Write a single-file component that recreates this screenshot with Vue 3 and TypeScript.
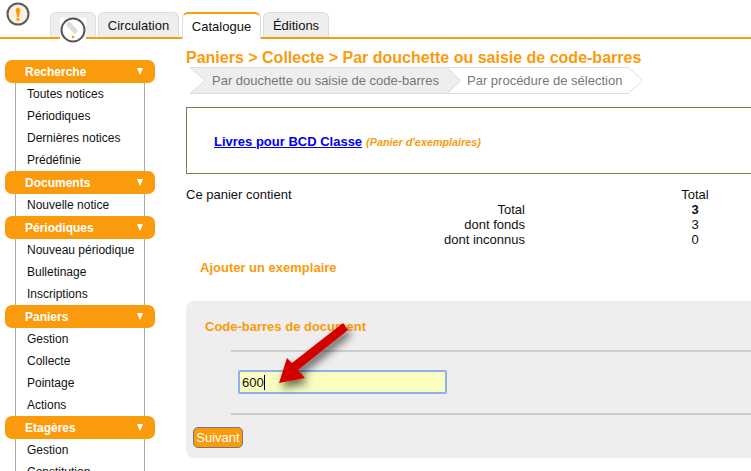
<script setup lang="ts">
interface Section { title: string; items: string[] }
const sections: Section[] = [
  { title: 'Recherche', items: ['Toutes notices', 'Périodiques', 'Dernières notices', 'Prédéfinie'] },
  { title: 'Documents', items: ['Nouvelle notice'] },
  { title: 'Périodiques', items: ['Nouveau périodique', 'Bulletinage', 'Inscriptions'] },
  { title: 'Paniers', items: ['Gestion', 'Collecte', 'Pointage', 'Actions'] },
  { title: 'Etagères', items: ['Gestion', 'Constitution'] },
]
const rows = [
  { label: 'Total', value: '3', strong: true },
  { label: 'dont fonds', value: '3', strong: false },
  { label: 'dont inconnus', value: '0', strong: false },
]
</script>

<template>
  <div class="page">
    <header class="topbar">
      <svg class="alert" width="26" height="26" viewBox="0 0 26 26">
        <circle cx="13" cy="13" r="10.5" fill="#fbf1de" stroke="#5a5a5a" stroke-width="2" />
        <path d="M10.6 8.5 Q13 4.6 15.4 8.5 L13.9 16 H12.1 Z" fill="#f99b0c" />
        <circle cx="13" cy="18.3" r="1.6" fill="#f99b0c" />
      </svg>
      <nav class="tabs">
        <div class="tab home">
          <span class="home-square"></span>
          <svg class="clock" width="28" height="28" viewBox="0 0 28 28">
            <circle cx="14" cy="14" r="11.5" fill="#fff" stroke="#555" stroke-width="2" />
            <path d="M10 8.5 L16 15" stroke="#ddd" stroke-width="5" stroke-linecap="round" />
            <circle cx="14" cy="21" r="1.3" fill="#f99b0c" />
          </svg>
        </div>
        <div class="tab t-circ">Circulation</div>
        <div class="tab active">Catalogue</div>
        <div class="tab t-edit">Éditions</div>
      </nav>
    </header>

    <div class="body">
      <aside class="sidebar">
        <section v-for="s in sections" :key="s.title" class="menu">
          <h3 class="menu-head">
            <span>{{ s.title }}</span>
            <i class="tri"></i>
          </h3>
          <ul class="menu-list">
            <li v-for="it in s.items" :key="it">{{ it }}</li>
          </ul>
        </section>
      </aside>

      <main class="main">
        <h1 class="title">Paniers &gt; Collecte &gt; Par douchette ou saisie de code-barres</h1>
        <div class="steps">
          <svg class="steps-bg" width="460" height="28" viewBox="0 0 460 28">
            <path d="M261 .5 H442 L457 13.5 L442 26.5 H261 L274 13.5 Z" fill="#fff" stroke="#ddd" />
            <path d="M4 .5 H261 L274 13.5 L261 26.5 H4 L19 13.5 Z" fill="#eee" stroke="#ddd" />
          </svg>
          <span class="step s1">Par douchette ou saisie de code-barres</span>
          <span class="step s2">Par procédure de sélection</span>
        </div>

        <div class="basket">
          <a class="basket-link" href="#">Livres pour BCD Classe</a>
          <em class="basket-type">(Panier d'exemplaires)</em>
        </div>

        <div class="stats">
          <div>Ce panier contient</div>
          <div class="val">Total</div>
          <template v-for="r in rows" :key="r.label">
            <div class="lab">{{ r.label }}</div>
            <div class="val" :class="{ strong: r.strong }">{{ r.value }}</div>
          </template>
        </div>

        <h2 class="add">Ajouter un exemplaire</h2>

        <form class="panel" @submit.prevent>
          <h3 class="panel-title">Code-barres de document</h3>
          <div class="panel-field">
            <div class="fake-input">600<span class="caret"></span></div>
          </div>
          <button class="next" type="button">Suivant</button>
        </form>
      </main>
    </div>

    <svg class="arrow" width="90" height="80" viewBox="0 0 90 80">
      <defs>
        <filter id="sh" x="-30%" y="-30%" width="170%" height="170%">
          <feGaussianBlur in="SourceAlpha" stdDeviation="4" />
          <feOffset dx="3" dy="5" />
          <feComponentTransfer><feFuncA type="linear" slope="0.6" /></feComponentTransfer>
          <feMerge><feMergeNode /><feMergeNode in="SourceGraphic" /></feMerge>
        </filter>
      </defs>
      <path d="M68 5 L73 12 L23 52 L30 60 L4 65 L12 40 L17 45 Z" fill="#d40000" filter="url(#sh)" />
    </svg>
  </div>
</template>

<style>
html, body { margin: 0; background: #fff; overflow: hidden; }
</style>

<style scoped>
.page {
  position: relative;
  width: 751px;
  height: 471px;
  overflow: hidden;
  font-family: "Liberation Sans", Arial, sans-serif;
  font-size: 13px;
  color: #111;
}
.topbar {
  position: relative;
  height: 39px;
  box-sizing: border-box;
  border-bottom: 2px solid #f99b0c;
}
.alert { position: absolute; left: 5px; top: 1px; }
.tabs { display: flex; padding: 12px 0 0 50px; height: 25px; }
.tab {
  box-sizing: border-box;
  height: 25px;
  padding-top: 5px;
  text-align: center;
  background: #eee;
  border: 1px solid #ddd;
  border-bottom: none;
  border-radius: 6px 6px 0 0;
  font-size: 13px;
}
.home { width: 46px; position: relative; }
.t-circ { width: 81px; margin-left: 2px; }
.t-edit { width: 66px; margin-left: 2px; }
.active {
  width: 79px;
  margin-left: 3px;
  height: 27px;
  background: #fff;
  border: 1px solid #ddd;
  border-top: 2px solid #f99b0c;
  border-bottom: none;
  position: relative;
  z-index: 1;
}
.home-square { position: absolute; left: 9px; top: 5px; width: 26px; height: 21px; background: #fff; }
.clock { position: absolute; left: 8px; top: 3px; z-index: 2; }
.body { display: flex; }
.sidebar { width: 186px; flex: none; padding: 21px 0 0 5px; box-sizing: border-box; }
.menu-head {
  display: flex;
  justify-content: space-between;
  align-items: center;
  box-sizing: border-box;
  width: 150px;
  height: 23px;
  margin: 0;
  padding: 0 12px 0 20px;
  background: #f99b0c;
  border-radius: 7px;
  color: #fff;
  font-size: 12px;
  font-weight: bold;
}
.tri {
  width: 0; height: 0;
  border-left: 3.5px solid transparent;
  border-right: 3.5px solid transparent;
  border-top: 7px solid #fff;
}
.menu-list {
  list-style: none;
  margin: 0 0 0 10px;
  padding: 0;
  width: 128px;
  box-sizing: content-box;
  border-left: 1px solid #aaa;
  border-right: 1px solid #aaa;
}
.menu-list li {
  height: 22px;
  line-height: 23px;
  padding-left: 11px;
  font-size: 12px;
}
.main { flex: 1; min-width: 0; padding-top: 10px; }
.title { margin: 0; font-size: 16px; line-height: 18px; font-weight: bold; color: #f99b0c; white-space: nowrap; }
.steps { position: relative; height: 28px; margin: 0 0 12px; }
.steps-bg { position: absolute; left: 0; top: 0; }
.step { position: absolute; top: 0; line-height: 27px; color: #777; font-size: 13px; white-space: nowrap; }
.s1 { left: 26px; }
.s2 { left: 281px; }
.basket {
  box-sizing: border-box;
  height: 67px;
  width: 600px;
  border: 1px solid #6b8a4a;
  padding: 25px 0 0 27px;
  line-height: 18px;
  margin-bottom: 13px;
}
.basket-link { color: #00e; font-weight: bold; font-size: 13px; text-decoration: underline; }
.basket-type { color: #f99b0c; font-weight: bold; font-size: 10.8px; margin-left: 4px; }
.stats { display: grid; grid-template-columns: 339px 340px; line-height: 15px; font-size: 13px; }
.lab { text-align: right; }
.val { text-align: center; }
.strong { font-weight: bold; }
.add { margin: 13px 0 0 14px; font-size: 13px; line-height: 15px; font-weight: bold; color: #f99b0c; }
.panel {
  box-sizing: border-box;
  width: 600px;
  height: 157px;
  margin-top: 26px;
  padding: 19px 0 0 7px;
  background: #eee;
  border-radius: 8px 0 0 8px;
}
.panel-title { margin: 0 0 0 12px; font-size: 13px; line-height: 14px; font-weight: bold; color: #f99b0c; }
.panel-field {
  margin: 16px 0 0 38px;
  border-top: 2px solid #ccc;
  border-bottom: 2px solid #ccc;
  padding: 18px 0 0 7px;
  box-sizing: border-box;
  height: 65px;
}
.fake-input {
  box-sizing: border-box;
  width: 209px;
  height: 24px;
  padding: 1px 2px;
  background: #f9fdbf;
  border: 2px solid #8fb0e8;
  border-radius: 2px;
  font-size: 13px;
  display: flex;
  align-items: center;
}
.caret { display: inline-block; width: 1px; height: 15px; background: #000; }
.next {
  display: block;
  box-sizing: border-box;
  margin-top: 12px;
  width: 50px;
  height: 21px;
  padding: 0;
  background: #f99b0c;
  color: #fff;
  border: 1px solid #777;
  border-radius: 5px;
  font-family: inherit;
  font-size: 13px;
}
.arrow { position: absolute; left: 275px; top: 318px; pointer-events: none; }
</style>
